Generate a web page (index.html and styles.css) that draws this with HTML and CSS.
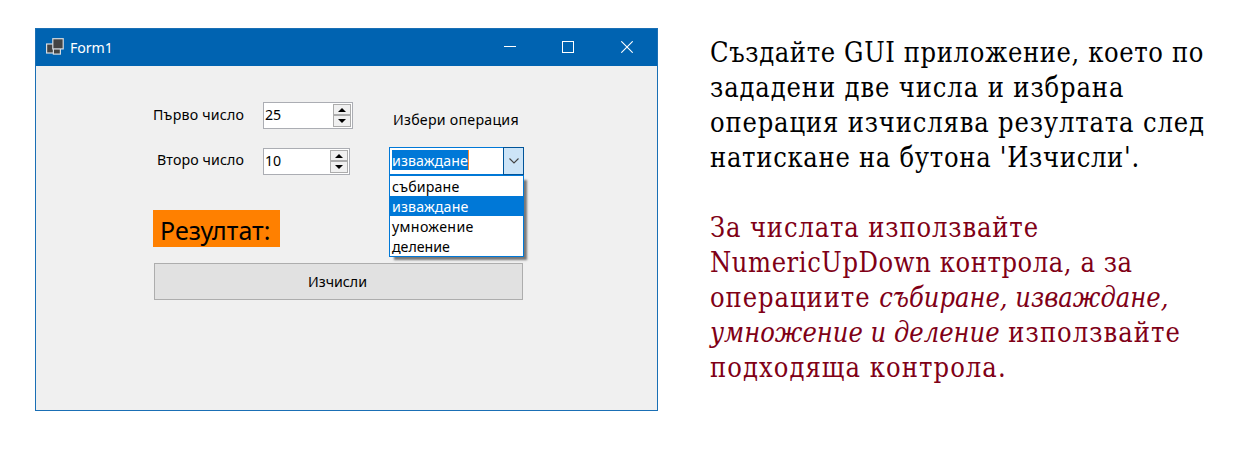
FILE: index.html
```html
<!DOCTYPE html>
<html lang="bg">
<head>
<meta charset="utf-8">
<title>Form1</title>
<link rel="stylesheet" href="styles.css">
</head>
<body>
<main class="page">
  <section class="window">
    <header class="titlebar">
      <svg class="app-icon" width="18" height="17" viewBox="0 0 18 17" fill="#444" stroke="#d5dbe1" stroke-width="1.2">
        <rect x="0.6" y="6" width="7" height="9"/>
        <rect x="7.4" y="10.5" width="7" height="5.6"/>
        <rect x="6.8" y="0.7" width="10.4" height="10.2"/>
      </svg>
      <span class="title">Form1</span>
      <div class="controls">
        <svg width="12" height="12" viewBox="0 0 12 12"><path d="M0 5.5H12" stroke="#fff"/></svg>
        <svg width="12" height="12" viewBox="0 0 12 12"><rect x=".5" y=".5" width="11" height="11" fill="none" stroke="#fff"/></svg>
        <svg class="close" width="12" height="12" viewBox="0 0 12 12"><path d="M.3.3L11.7 11.7M11.7.3L.3 11.7" stroke="#fff" stroke-width="1.1"/></svg>
      </div>
    </header>
    <div class="form">
      <div class="inputs">
        <div class="numbers">
          <div class="row">
            <label class="label">Първо число</label>
            <div class="spinner spinner-first">
              <span class="value">25</span>
              <div class="arrows">
                <span class="arrow"><svg width="8" height="4" viewBox="0 0 8 4"><path d="M4 0L8 4H0Z"/></svg></span>
                <span class="arrow"><svg width="8" height="4" viewBox="0 0 8 4"><path d="M0 0H8L4 4Z"/></svg></span>
              </div>
            </div>
          </div>
          <div class="row">
            <label class="label label-second">Второ число</label>
            <div class="spinner spinner-second">
              <span class="value">10</span>
              <div class="arrows">
                <span class="arrow"><svg width="8" height="4" viewBox="0 0 8 4"><path d="M4 0L8 4H0Z"/></svg></span>
                <span class="arrow"><svg width="8" height="4" viewBox="0 0 8 4"><path d="M0 0H8L4 4Z"/></svg></span>
              </div>
            </div>
          </div>
          <div class="result">Резултат:</div>
        </div>
        <div class="operation">
          <label class="label label-operation">Избери операция</label>
          <div class="combo">
            <span class="selected">изваждане</span>
            <span class="drop"><svg width="10" height="6" viewBox="0 0 10 6"><path d="M.5.5L5 5L9.5.5" fill="none" stroke="#444" stroke-width="1.1"/></svg></span>
            <ul class="menu">
              <li class="item item-1">събиране</li>
              <li class="item item-2">изваждане</li>
              <li class="item item-3">умножение</li>
              <li class="item item-4">деление</li>
            </ul>
          </div>
        </div>
      </div>
      <button class="submit">Изчисли</button>
    </div>
  </section>
  <section class="task">
    <p class="paragraph">
      <span class="line line-1">Създайте GUI приложение, което по</span>
      <span class="line line-2">зададени две числа и избрана</span>
      <span class="line line-3">операция изчислява резултата след</span>
      <span class="line line-4">натискане на бутона 'Изчисли'.</span>
    </p>
    <p class="paragraph note">
      <span class="line line-5">За числата използвайте</span>
      <span class="line line-6">NumericUpDown контрола, а за</span>
      <span class="line line-7">операциите <em>събиране, изваждане,</em></span>
      <span class="line line-8"><em>умножение и деление</em> използвайте</span>
      <span class="line line-9">подходяща контрола.</span>
    </p>
  </section>
</main>
</body>
</html>
```
FILE: styles.css
```css
* { box-sizing: border-box; }
body { margin: 0; background: #fff; overflow: hidden; }
.page {
  display: flex;
  align-items: flex-start;
  gap: 52px;
  width: 1242px;
  height: 456px;
  padding: 28px 0 0 35px;
}
.window {
  flex: none;
  width: 623px;
  height: 383px;
  border: 1px solid #1a6fb5;
  background: #f0f0f0;
  font: 14.2px/20px "Noto Sans", sans-serif;
  color: #000;
}
.titlebar {
  display: flex;
  align-items: center;
  height: 37px;
  padding: 0 24px 0 10px;
  background: #0063b1;
  color: #fff;
}
.app-icon { margin-top: -2px; }
.title { margin-left: 6px; letter-spacing: -0.1px; }
.controls { display: flex; gap: 46px; margin: -1px 0 0 auto; }
.controls svg { display: block; }
.controls .close { margin-left: 1px; }
.form { width: 371px; margin: 36px 0 0 117px; }
.inputs { display: flex; gap: 36px; }
.numbers { width: 200px; }
.row { display: flex; height: 27px; margin-bottom: 19px; }
.label { white-space: nowrap; letter-spacing: 0.2px; }
.row .label { width: 110px; padding-top: 3px; }
.row .label-second { padding: 2px 0 0 4px; letter-spacing: 0.12px; }
.spinner {
  display: flex;
  justify-content: space-between;
  height: 27px;
  padding: 1px;
  border: 1px solid #abadb3;
  background: #fff;
}
.spinner-first { width: 90px; }
.spinner-second { width: 87px; }
.value { line-height: 22px; }
.arrows { width: 18px; height: 23px; }
.arrow {
  display: flex;
  align-items: center;
  justify-content: center;
  height: 11px;
  border: 1px solid #acacac;
  background: #f0f0f0;
}
.arrow + .arrow { height: 12px; }
.result {
  width: 127px;
  height: 37px;
  margin-top: 35px;
  padding-left: 7px;
  background: #ff8000;
  font-size: 25px;
  line-height: 40px;
  white-space: nowrap;
}
.operation { width: 135px; padding-top: 8px; }
.label-operation { display: block; height: 37px; padding-left: 4px; letter-spacing: 0.25px; }
.combo {
  position: relative;
  display: flex;
  justify-content: space-between;
  width: 135px;
  height: 28px;
  border: 1px solid #0078d7;
  background: #fff;
}
.selected {
  height: 20px;
  margin: 2px 0 0 2px;
  border-right: 1px solid #ff8728;
  background: #0078d7;
  color: #fff;
  line-height: 21px;
  letter-spacing: 0.1px;
}
.drop {
  display: flex;
  align-items: center;
  justify-content: center;
  width: 21px;
  height: 28px;
  margin: -1px -1px 0 0;
  border: 1px solid #005499;
  background: #cce4f7;
}
.menu {
  position: absolute;
  top: 27px;
  left: -1px;
  width: 135px;
  height: 82px;
  margin: 0;
  padding: 0;
  border: 1px solid #0078d7;
  background: #fff;
  box-shadow: 4px 4px 2px -1px rgba(0, 0, 0, 0.5);
  list-style: none;
}
.item { height: 20px; padding-left: 2px; line-height: 21px; letter-spacing: 0.15px; }
.item-2 { background: #0078d7; color: #fff; }
.item-3 { letter-spacing: 0.35px; }
.item-4 { letter-spacing: 0; }
.submit {
  display: block;
  width: 369px;
  height: 37px;
  margin: 16px 0 0 1px;
  padding: 0 2px 0 0;
  border: 1px solid #adadad;
  background: #e1e1e1;
  color: #000;
  font: inherit;
}
.task {
  padding-top: 7px;
  color: #000;
  font: 27px/35px "DejaVu Serif Condensed", "DejaVu Serif", serif;
  font-stretch: condensed;
  white-space: nowrap;
}
.paragraph { margin: 0 0 35px; }
.note { color: #800016; }
.line { display: block; width: max-content; }
.line-1 { letter-spacing: 0.63px; }
.line-2 { letter-spacing: 0.89px; }
.line-3 { letter-spacing: 0.85px; }
.line-4 { letter-spacing: 0.71px; }
.line-5 { letter-spacing: 0.87px; }
.line-6 { letter-spacing: 0.58px; }
.line-7 { letter-spacing: 0.95px; }
.line-8 { letter-spacing: 1.05px; }
.line-9 { letter-spacing: 1.07px; }
.line em { letter-spacing: 0; }
```
